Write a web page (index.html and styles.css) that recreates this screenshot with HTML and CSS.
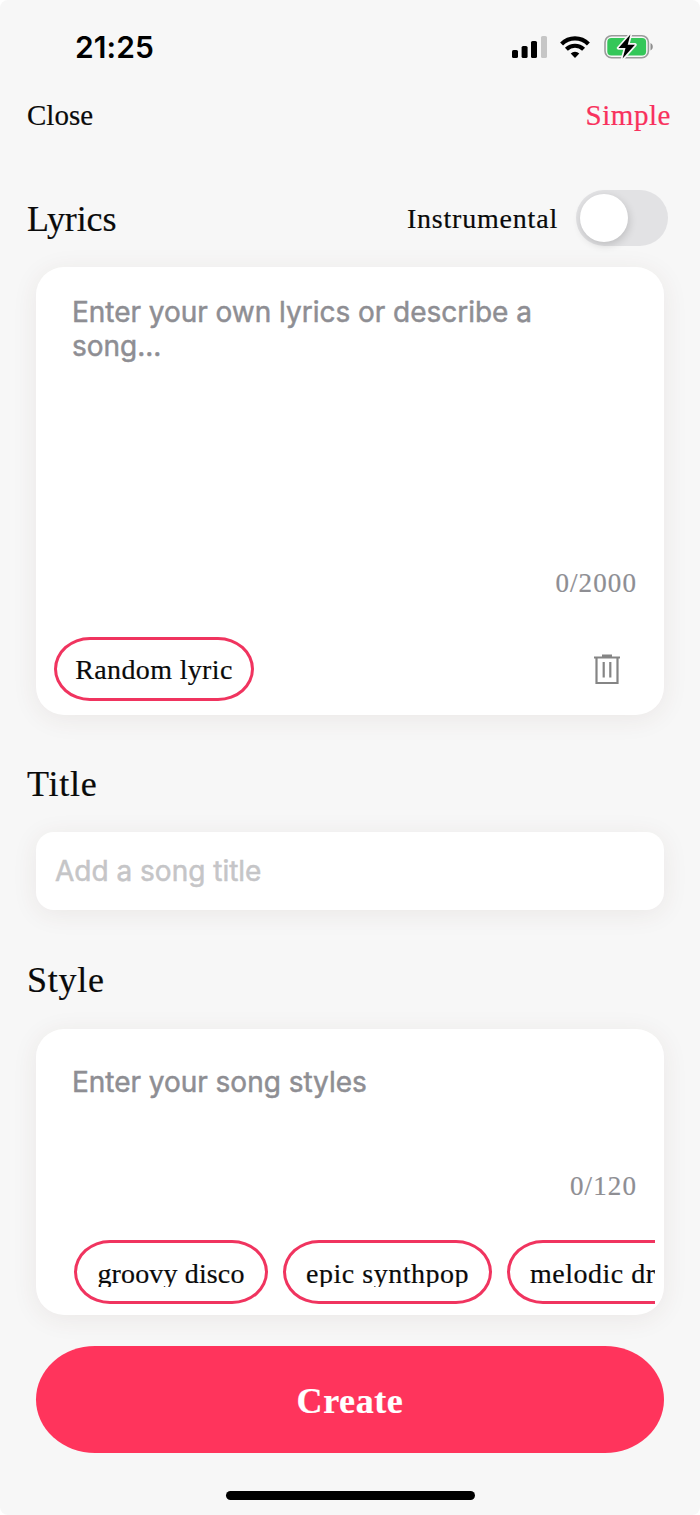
FILE: index.html
```html
<!DOCTYPE html>
<html lang="en">
<head>
<meta charset="utf-8">
<title>Create song</title>
<link rel="stylesheet" href="styles.css">
</head>
<body>
<main class="screen">
  <div class="status">
    <span class="time">21:25</span>
    <div class="status-icons">
      <svg class="signal" width="36" height="24" viewBox="0 0 36 24">
        <rect x="0" y="14" width="6" height="8" rx="1.6"/>
        <rect x="9.6" y="10" width="6" height="12" rx="1.6"/>
        <rect x="19" y="5" width="6" height="17" rx="1.6"/>
        <rect x="29" y="0" width="6" height="22" rx="1.6" fill="#c6c6c6"/>
      </svg>
      <svg class="wifi" width="30" height="24" viewBox="0 0 30 24" fill="none" stroke="#000" stroke-width="4.2">
        <path d="M1.6 8.9A19.2 19.2 0 0 1 28.4 8.9"/>
        <path d="M6.4 14.2A12.4 12.4 0 0 1 23.6 14.2"/>
        <path d="M15 23l-4.300-4.500a6.300 6.300 0 0 1 8.600 0z" fill="#000" stroke="none"/>
      </svg>
      <svg class="battery" width="50" height="28" viewBox="0 0 50 28">
        <rect x="1" y="2.700" width="43.400" height="22" rx="6.600" fill="none" stroke="#9b9b9b" stroke-width="1.600"/>
        <path d="M46.500 10c3 1.300 3 6.200 0 7.500z" fill="#8f8f8f"/>
        <rect x="3.300" y="5" width="38.800" height="17.400" rx="4" fill="#34c759"/>
        <path d="M26.400 1.500L14.500 15H21.500L18.600 25.500L31 11.800H23.700Z" fill="#000" stroke="#f7f7f7" stroke-width="3.400" stroke-linejoin="round" paint-order="stroke"/>
      </svg>
    </div>
  </div>

  <nav class="nav">
    <span class="close">Close</span>
    <span class="simple">Simple</span>
  </nav>

  <div class="lyrics-head">
    <h2 class="heading lyrics-title">Lyrics</h2>
    <span class="instrumental">Instrumental</span>
    <span class="toggle"><span class="knob"></span></span>
  </div>

  <section class="card lyrics-card">
    <p class="placeholder">Enter your own lyrics or describe a<br>song...</p>
    <span class="count">0/2000</span>
    <div class="card-actions">
      <span class="chip random">Random lyric</span>
      <svg class="trash" width="26" height="31" viewBox="0 0 26 31" fill="none" stroke="#858585" stroke-width="2.200">
        <path d="M0 3.500H26M8 1.600H18M2.500 3V29H23.500V3M9.700 8V23.500M16.300 8V23.500"/>
      </svg>
    </div>
  </section>

  <h2 class="heading title-heading">Title</h2>
  <section class="card title-card">Add a song title</section>

  <h2 class="heading style-heading">Style</h2>
  <section class="card style-card">
    <p class="placeholder">Enter your song styles</p>
    <span class="count">0/120</span>
    <div class="chips">
      <span class="chip groovy"><span class="chip-text">groovy disco</span></span>
      <span class="chip epic"><span class="chip-text">epic synthpop</span></span>
      <span class="chip melodic"><span class="chip-text">melodic dr</span></span>
    </div>
  </section>

  <div class="create"><span class="create-label">Create</span></div>
  <div class="home"></div>
</main>
</body>
</html>
```
FILE: styles.css
```css
* { box-sizing: border-box; }
body { margin: 0; background: #fff; }
.screen {
  width: 700px;
  height: 1515px;
  overflow: hidden;
  display: flex;
  flex-direction: column;
  background: #f7f7f7;
  border-radius: 8px;
  color: #0a0a0a;
  font-family: "Liberation Serif", serif;
  -webkit-text-stroke: 0.2px currentColor;
}
.status {
  height: 94px;
  padding: 0 46px 0 75px;
  display: flex;
  justify-content: space-between;
  align-items: center;
}
.time {
  font: 600 30px/36px Inter, sans-serif;
  letter-spacing: 0.1px;
  color: #000;
  -webkit-text-stroke: 0;
}
.status-icons { display: flex; align-items: center; }
.signal { margin: 1px 12px 0 0; }
.wifi { margin-right: 14px; }
.nav {
  height: 40px;
  padding: 2px 29px 0 27px;
  display: flex;
  justify-content: space-between;
  align-items: center;
  font-size: 29px;
}
.simple { color: #f8315d; letter-spacing: 0.55px; }
.lyrics-head {
  height: 56px;
  margin-top: 56px;
  padding: 0 32px 0 27px;
  display: flex;
  align-items: center;
}
.heading {
  margin: 0;
  font-size: 36px;
  line-height: 40px;
  font-weight: 400;
  letter-spacing: 0.75px;
}
.lyrics-title { flex: 1; padding-top: 2px; letter-spacing: -0.1px; }
.instrumental { padding-top: 2px; font-size: 28px; letter-spacing: 0.8px; margin-right: 18px; }
.toggle {
  width: 92px;
  height: 56px;
  padding: 4px;
  border-radius: 28px;
  background: #e2e2e4;
}
.knob {
  display: block;
  width: 48px;
  height: 48px;
  border-radius: 50%;
  background: #fff;
  box-shadow: 1px 3px 8px rgba(0, 0, 0, 0.16);
}
.card {
  margin: 0 36px;
  background: #fff;
  border-radius: 28px;
  box-shadow: 0 4px 26px rgba(90, 45, 35, 0.08);
  display: flex;
  flex-direction: column;
  flex-shrink: 0;
}
.placeholder {
  margin: 0 36px;
  font: 400 28px/34px Inter, sans-serif;
  letter-spacing: -0.03px;
  color: #8e8e93;
  -webkit-text-stroke: 0.5px #8e8e93;
}
.count {
  margin-right: 27px;
  align-self: flex-end;
  font-size: 27px;
  line-height: 32px;
  letter-spacing: 1.1px;
  color: #8e8e93;
}
.lyrics-card { height: 448px; margin-top: 21px; padding-top: 28px; }
.lyrics-card .count { margin-top: 204px; }
.card-actions {
  margin: 38px 44px 0 18px;
  display: flex;
  justify-content: space-between;
  align-items: center;
}
.chip {
  height: 64px;
  flex: none;
  display: flex;
  align-items: center;
  justify-content: center;
  border: 3px solid #f0345f;
  border-radius: 36px / 32px;
  font-size: 28px;
}
.random { width: 200px; padding-top: 2px; letter-spacing: 0.35px; }
.title-heading { margin: 49px 27px 28px; }
.title-card {
  height: 78px;
  padding: 0 19px;
  justify-content: center;
  border-radius: 18px;
  font: 400 28px/34px Inter, sans-serif;
  color: #c5c5c7;
  -webkit-text-stroke: 0.5px #c5c5c7;
}
.style-heading { margin: 50px 27px 29px; }
.style-card { height: 286px; padding-top: 36px; }
.style-card .count { margin-top: 71px; }
.chips {
  margin: 38px 9px 0 38px;
  display: flex;
  gap: 15px;
  overflow: hidden;
}
.chip-text { height: 29px; line-height: 32px; overflow: hidden; white-space: nowrap; }
.groovy { width: 194px; letter-spacing: 0.15px; }
.epic { width: 209px; letter-spacing: 0.5px; }
.melodic { width: 240px; padding-left: 20px; justify-content: flex-start; letter-spacing: 0.5px; }
.create {
  height: 107px;
  margin: 31px 36px 0;
  display: flex;
  align-items: center;
  justify-content: center;
  flex-shrink: 0;
  border-radius: 59px / 53.5px;
  background: #ff345c;
  color: #fff;
  font-size: 36px;
  font-weight: 700;
  letter-spacing: 0.6px;
}
.create-label { padding-top: 2px; }
.home {
  width: 249px;
  height: 9px;
  margin: 38px 0 0 226px;
  flex-shrink: 0;
  border-radius: 5px;
  background: #000;
}
```
